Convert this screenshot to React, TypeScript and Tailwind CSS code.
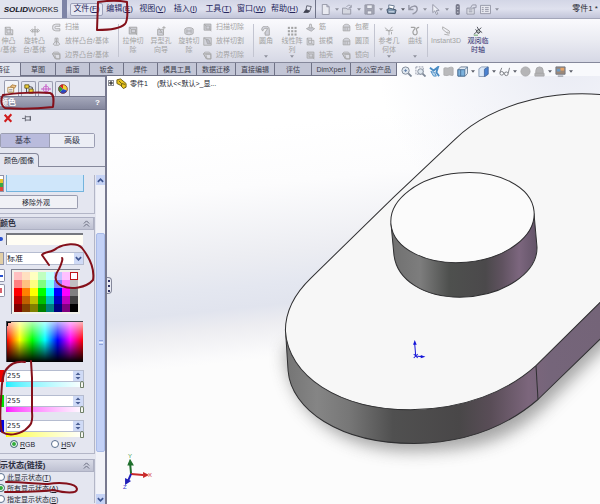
import type { ReactNode } from 'react';
import clsx from 'clsx';

type IconProps = { className?: string };

const Svg = ({
  children,
  className = 'h-[10px] w-[10px]',
}: {
  children: ReactNode;
  className?: string;
}) => (
  <svg
    viewBox="0 0 12 12"
    fill="none"
    stroke="currentColor"
    strokeWidth="1"
    className={clsx('shrink-0', className)}
    aria-hidden="true"
  >
    {children}
  </svg>
);

/* feature icons, all greyed out while a property page is open */
const BlockIcon = (p: IconProps) => (
  <Svg {...p}>
    <path d="M1.500 1.500h6v3h3v6h-9z" fill="#dcdde5" />
    <path d="M3.500 4.500h4v4h-4zM7.500 8.500l3 2M1.500 1.500l2 3" />
  </Svg>
);
const RevolveIcon = (p: IconProps) => (
  <Svg {...p}>
    <path d="M6 0v12M3 4.500h6v2.500H3z" fill="#dcdde5" />
    <path d="M3 3.500L.500 5.500 3 8M9 3.500l2.500 2L9 8" />
  </Svg>
);
const SweepIcon = (p: IconProps) => (
  <Svg {...p}>
    <path
      d="M10.500 1.500H5A4.300 4.300 0 0 0 5 10.500h5.500v-3H5.500a1.500 1.500 0 0 1 0-3h5z"
      fill="#e0e1e8"
    />
  </Svg>
);
const LoftIcon = (p: IconProps) => (
  <Svg {...p}>
    <path d="M4 1.500h4v5l2.500 3-2 1.500h-5l-2-1.500L4 6.500z" fill="#dcdde5" />
    <path d="M4 6.500h4M6 2v8" />
  </Svg>
);
const BoundaryIcon = (p: IconProps) => (
  <Svg {...p}>
    <path d="M.500 3.500l2-2h6l2 2v7h-6z" fill="#dcdde5" />
    <path d="M3.500 4.500h7v6h-5zM.500 3.500l4 7M1 3.500h9" />
  </Svg>
);
const CutIcon = (p: IconProps) => (
  <Svg {...p}>
    <path d="M1 1h10v9H1z" fill="#cfd0d8" stroke="none" />
    <path d="M1.500 1.500h9v8h-9zM4 4h5v4H4zM1.500 1.500L4 4M9 8l2 3" />
  </Svg>
);
const SlantCutIcon = (p: IconProps) => (
  <Svg {...p}>
    <path d="M1 1h10v10H1z" fill="#d3d4dc" />
    <path d="M4 3l4 1 2 5H6z" fill="#b9bac4" />
    <path d="M1 1l3 2" />
  </Svg>
);
const HoleIcon = (p: IconProps) => (
  <Svg {...p}>
    <path d="M2 4h7v7H2z" fill="#cfd0d8" />
    <path d="M3 2l5 7M9.500 0v4M7.500 2h4M4 7.500h3" />
  </Svg>
);
const RevolveCutIcon = (p: IconProps) => (
  <Svg {...p}>
    <path d="M1 3.500c1-2 9-2 10 0V9c-1 2-9 2-10 0z" fill="#d3d4dc" />
    <path d="M3.500 4v5M8.500 4v5M4 6h4" />
  </Svg>
);
const FilletIcon = (p: IconProps) => (
  <Svg {...p}>
    <path d="M1 5a4.500 4.500 0 0 1 9-1v7H5V8z" fill="#cfd0d8" />
    <path d="M2 6a5 5 0 0 1 6-3L4 9" fill="#f0f0f4" />
  </Svg>
);
const PatternIcon = (p: IconProps) => (
  <Svg {...p}>
    {[1, 5, 9].map((x) =>
      [1, 5, 9].map((y) => (
        <rect
          key={`${x}-${y}`}
          x={x}
          y={y}
          width="2.500"
          height="2.500"
          fill="currentColor"
          stroke="none"
        />
      ))
    )}
  </Svg>
);
const RibIcon = (p: IconProps) => (
  <Svg {...p}>
    <path d="M.500 7.500L6 5l5.500 2.500L7 11z" fill="#c6c8d2" />
    <path d="M5 1.500h2l1 5H4z" fill="#dcdde5" />
  </Svg>
);
const CapIcon = (p: IconProps) => (
  <Svg {...p}>
    <path d="M1.500 5c0-4.500 9-4.500 9 0v5.500h-9z" fill="#d3d4dc" />
    <path d="M1.500 5.500h9M4 6v4M7 6v4" />
  </Svg>
);
const CurveIcon = (p: IconProps) => (
  <Svg {...p}>
    <path d="M1 1.500h4c2 0 1 2-.500 3.500S3 10.500 6 10.500s3-3 2-5 .500-4 3-4" strokeWidth="1.500" />
  </Svg>
);
const RefGeomIcon = (p: IconProps) => (
  <Svg {...p}>
    <path d="M1 2l5 4 4-5M6 6v5M2 5l4 1 5-1M9 7v3" />
  </Svg>
);
const InstantIcon = (p: IconProps) => (
  <Svg {...p}>
    <path d="M2 1l8 5v3M2 4l6 5M10 9L7 7M2 1v3M4 10l6 1" />
  </Svg>
);
const AxisIcon = (p: IconProps) => (
  <Svg {...p}>
    <path d="M1 10L10 2M5 1l2 4 4 3M3 4l4 5" stroke="#3c3f48" />
    <path d="M4 6l3-2 2 3-3 2z" fill="#b7c0bc" stroke="#3c3f48" />
    <path d="M1 11h5" stroke="#4f9a4a" />
  </Svg>
);

/* quick access bar */
const NewIcon = (p: IconProps) => (
  <Svg {...p}>
    <path d="M2.500.500h5l2.500 2.500v8.500H2.500zM7.500.500V3H10" fill="#e9eaf1" />
  </Svg>
);
const OpenIcon = (p: IconProps) => (
  <Svg {...p}>
    <path d="M.500 4.500h4l1 1h4v5.500h-9z" fill="#d5d7e0" />
    <path d="M5 3c2-2.500 4-2 5 .500M10 1v3H7.500" />
  </Svg>
);
const SaveIcon = (p: IconProps) => (
  <Svg {...p}>
    <path d="M1 1h10v10H1z" fill="#a5a7b4" />
    <path d="M3 1h6v4H3zM3.500 7.500h5V11h-5z" fill="#eceef4" />
  </Svg>
);
const PrintIcon = (p: IconProps) => (
  <Svg {...p}>
    <path d="M3 1l6 1-1 4H3z" fill="#fff" stroke="#63758c" />
    <path d="M1 6l3-1.500 7 2-1 4-8-.500z" fill="#7f97b0" stroke="#3f5166" />
    <path d="M3 8.500h6" stroke="#dfe8f2" />
  </Svg>
);
const UndoIcon = (p: IconProps) => (
  <Svg {...p}>
    <path d="M1 1v5h5M1.500 5.500C4 1.500 9.500 1 10 5s-3 5-5 6" strokeWidth="1.500" />
  </Svg>
);
const SelectIcon = (p: IconProps) => (
  <Svg {...p}>
    <path d="M3 .500v9l2.200-2L7 11.500l1.500-.700L6.800 7H10z" fill="#eef0f6" />
  </Svg>
);
const RebuildIcon = (p: IconProps) => (
  <Svg {...p}>
    <rect x="4" y="0" width="4.500" height="12" rx="2" fill="#77798a" stroke="none" />
    <path d="M5.500 3h1.500M5.500 6h1.500M5.500 9h1.500" stroke="#d5d7e0" />
  </Svg>
);
const OptionsIcon = (p: IconProps) => (
  <Svg {...p}>
    <path d="M1 4.500h8v6.500H1z" fill="#dfe1e9" />
    <path d="M5 4l2-3h4v3H8M3 6.500h4M3 8.500h4" />
  </Svg>
);
const PropsIcon = (p: IconProps) => (
  <Svg {...p}>
    <path d="M.500 1.500h11v9H.500z" fill="#e7e8ef" />
    <path d="M2 4h2M2 6h2M2 8h2M5.500 4h4M5.500 6h4M5.500 8h4" />
  </Svg>
);

/* heads-up view toolbar */
const ZoomFitIcon = (p: IconProps) => (
  <Svg {...p}>
    <circle cx="5" cy="5" r="4" fill="#dfe7ef" stroke="#7d8796" />
    <path d="M8 8l3.500 3.500" stroke="#7d8796" strokeWidth="2" />
    <path d="M3.500 5h3M5 3.500v3" stroke="#5f7ea8" />
  </Svg>
);
const ZoomAreaIcon = (p: IconProps) => (
  <Svg {...p}>
    <path d="M1 1h8v8H1z" stroke="#8b93a3" strokeDasharray="2 1" />
    <circle cx="6" cy="6" r="3" fill="#dfe7ef" stroke="#7d8796" />
    <path d="M8.500 8.500l3 3" stroke="#7d8796" strokeWidth="2" />
  </Svg>
);
const PrevViewIcon = (p: IconProps) => (
  <Svg {...p}>
    <path d="M1 2l4 3 5-4-2 6 3 4" stroke="#4a8cc4" strokeWidth="2" />
    <path d="M2 6l4 1 2 4H5z" fill="#b9d7ee" stroke="#4a8cc4" />
  </Svg>
);
const SectionIcon = (p: IconProps) => (
  <Svg {...p}>
    <path d="M1 2.500C3 1 5 3 6.500 2S10 1 11 2v8c-2 1-3-1-5 0s-4 0-5 0z" fill="#b9b9bb" stroke="#acacae" />
  </Svg>
);
const CubeIcon = (p: IconProps) => (
  <Svg {...p}>
    <path d="M4 1h7.500v7L9 11H1V4z" fill="#e3ebf3" stroke="#6d7f94" />
    <path d="M1 4h7.500v7H1z" fill="#7db2dc" stroke="#4a7299" />
    <path d="M8.500 4l3-3M4 4v7" stroke="#4a7299" />
  </Svg>
);
const ShadedIcon = (p: IconProps) => (
  <Svg {...p}>
    <path d="M1 3l3-2h7v8l-3 2.500H1z" fill="#dbe8f7" stroke="#8a9bb5" />
    <path d="M7 3.500L11 1v8l-4 2.500z" fill="#4a82d2" stroke="#4a6fa5" />
  </Svg>
);
const GlassesIcon = (p: IconProps) => (
  <Svg {...p}>
    <circle cx="3" cy="8" r="2" stroke="#777a80" />
    <circle cx="8" cy="8.500" r="2" stroke="#777a80" />
    <path d="M1 7l2-5M5 7.500h1M10 8l1.500-6" stroke="#777a80" />
  </Svg>
);
const SphereIcon = (p: IconProps) => (
  <Svg {...p}>
    <circle cx="6" cy="6" r="5" fill="#b5b5b7" stroke="#ababad" />
  </Svg>
);
const SceneIcon = (p: IconProps) => (
  <Svg {...p}>
    <path d="M2 8V5a4 4 0 0 1 8 0v3zM1 8h10v3H1z" fill="#b5b5b7" stroke="#a8a8ab" />
  </Svg>
);
const ViewSetIcon = (p: IconProps) => (
  <Svg {...p}>
    <path d="M1 1h10v8H1z" fill="#9c8878" stroke="#737883" />
    <path d="M2 3h4v3H2z" fill="#6b9ac6" stroke="none" />
    <path d="M6 2h4v3H6z" fill="#e5a468" stroke="none" />
    <path d="M3 11h6" stroke="#737883" />
  </Svg>
);

const Caret = ({ dark }: { dark?: boolean }) => (
  <svg viewBox="0 0 6 4" className="h-[3px] w-[4px] shrink-0" aria-hidden="true">
    <path d="M0 0h6L3 4z" fill={dark ? '#5c5f6a' : '#8f919d'} />
  </svg>
);

const menus: [string, string][] = [
  ['文件', 'F'],
  ['编辑', 'E'],
  ['视图', 'V'],
  ['插入', 'I'],
  ['工具', 'T'],
  ['窗口', 'W'],
  ['帮助', 'H'],
];

const quickTools = [
  { id: 'new', Icon: NewIcon, menu: true },
  { id: 'open', Icon: OpenIcon, menu: true },
  { id: 'save', Icon: SaveIcon, menu: true },
  { id: 'print', Icon: PrintIcon, menu: true },
  { id: 'undo', Icon: UndoIcon, menu: true },
  { id: 'select', Icon: SelectIcon, menu: true },
  { id: 'rebuild', Icon: RebuildIcon, menu: false },
  { id: 'options', Icon: OptionsIcon, menu: false },
  { id: 'props', Icon: PropsIcon, menu: true },
];

const MenuBar = () => (
  <header className="flex h-[19px] shrink-0 items-center whitespace-nowrap border-b border-[#a3a6b9] bg-linear-to-b from-[#d3d6e6] via-[#dfe1ee] to-[#c2c5d9]">
    <div className="flex h-full w-[62px] shrink-0 items-center justify-center bg-[#e1e3ee] pt-[2px] text-[8px] text-[#15151f]">
      <b className="italic">SOLID</b>
      <span>WORKS</span>
    </div>
    <div className="mr-[3px] h-full w-[5px] shrink-0 bg-[#7e84a6]" />
    <nav className="flex h-full shrink-0 items-center">
      {menus.map(([name, key], i) => (
        <button
          key={key}
          type="button"
          className={clsx(
            'h-[13px] w-[33px] rounded-xs text-[8px] leading-none text-[#25265c]',
            i === 0 && 'border border-[#9da1ba] bg-[#e6e8f3]'
          )}
        >
          {name}(<u>{key}</u>)
        </button>
      ))}
    </nav>
    <button type="button" aria-label="pin menu" className="ml-[2px] text-[#3f4150]">
      <Svg className="h-[9px] w-[9px]">
        <path d="M5 1l6 1-2 6-5-2z" fill="#e6e8f3" />
        <path d="M4 6l-3 4h6l2-2" fill="#3f4150" />
      </Svg>
    </button>
    <div className="mr-1 ml-[3px] h-full w-px bg-[#6f7388]" />
    <div className="flex shrink-0 items-center gap-[3px] text-[#9496a5]">
      {quickTools.map(({ id, Icon, menu }) => (
        <button key={id} type="button" aria-label={id} className="flex items-center gap-1">
          <Icon className="h-[11px] w-[11px]" />
          {menu && <Caret dark={id === 'print'} />}
        </button>
      ))}
    </div>
    <span className="mr-[2px] ml-auto text-[8px] text-[#25262e]">零件1 *</span>
  </header>
);

type BigToolProps = {
  Icon: (p: IconProps) => ReactNode;
  lines: string[];
  className: string;
  menu?: boolean;
};

const BigTool = ({ Icon, lines, className, menu }: BigToolProps) => (
  <button
    type="button"
    className={clsx('flex h-full shrink-0 flex-col items-center pt-[7px] text-[7px] leading-[9px]', className)}
  >
    <Icon />
    {lines.map((line) => (
      <span key={line}>{line}</span>
    ))}
    {menu && (
      <span className="mt-auto pb-1">
        <Caret />
      </span>
    )}
  </button>
);

type SmallTool = [(p: IconProps) => ReactNode, string];

const ToolColumn = ({ tools, className }: { tools: SmallTool[]; className: string }) => (
  <div className={clsx('flex shrink-0 flex-col pt-px', className)}>
    {tools.map(([Icon, label]) => (
      <button key={label} type="button" className="flex h-[14px] items-center gap-1 text-[7px]">
        <Icon className="h-[9px] w-[9px]" />
        {label}
      </button>
    ))}
  </div>
);

const Separator = () => <div className="my-[5px] w-px shrink-0 bg-[#c3c5d1]" />;

const Ribbon = () => (
  <div className="flex h-[43px] shrink-0 overflow-hidden whitespace-nowrap bg-linear-to-b from-[#fafafd] via-[#eaebf2] to-[#d6d8e5] text-[#a3a3a3]">
    <BigTool Icon={BlockIcon} lines={['伸凸', '/基体']} className="w-[17px]" />
    <BigTool Icon={RevolveIcon} lines={['旋转凸', '台/基体']} className="w-[35px]" />
    <ToolColumn
      className="w-[66px]"
      tools={[
        [SweepIcon, '扫描'],
        [LoftIcon, '放样凸台/基体'],
        [BoundaryIcon, '边界凸台/基体'],
      ]}
    />
    <Separator />
    <BigTool Icon={CutIcon} lines={['拉伸切', '除']} className="w-7" />
    <BigTool Icon={HoleIcon} lines={['异型孔', '向导']} className="w-7" />
    <BigTool Icon={RevolveCutIcon} lines={['旋转切', '除']} className="w-7" />
    <ToolColumn
      className="w-[50px]"
      tools={[
        [CutIcon, '扫描切除'],
        [SlantCutIcon, '放样切割'],
        [BoundaryIcon, '边界切除'],
      ]}
    />
    <Separator />
    <BigTool Icon={FilletIcon} lines={['圆角']} className="w-6" menu />
    <BigTool Icon={PatternIcon} lines={['线性阵', '列']} className="w-7" menu />
    <ToolColumn
      className="w-9"
      tools={[
        [RibIcon, '筋'],
        [BlockIcon, '拔模'],
        [CutIcon, '抽壳'],
      ]}
    />
    <ToolColumn
      className="w-8"
      tools={[
        [CapIcon, '包覆'],
        [CapIcon, '圆顶'],
        [BoundaryIcon, '镜向'],
      ]}
    />
    <Separator />
    <BigTool Icon={RefGeomIcon} lines={['参考几', '何体']} className="w-7" menu />
    <BigTool Icon={CurveIcon} lines={['曲线']} className="w-6" menu />
    <Separator />
    <BigTool Icon={InstantIcon} lines={['Instant3D']} className="w-9" />
    <BigTool Icon={AxisIcon} lines={['观阅临', '时轴']} className="w-7 text-[#2c2d6b]" />
  </div>
);

const tabs = [
  { name: '草图', width: 'w-[35px]' },
  { name: '曲面', width: 'w-[34px]' },
  { name: '钣金', width: 'w-[34px]' },
  { name: '焊件', width: 'w-[34px]' },
  { name: '模具工具', width: 'w-[39px]' },
  { name: '数据迁移', width: 'w-[39px]' },
  { name: '直接编辑', width: 'w-[39px]' },
  { name: '评估', width: 'w-[37px]' },
  { name: 'DimXpert', width: 'w-[39px]' },
  { name: '办公室产品', width: 'w-[46px]' },
];

const viewTools = [
  { id: 'zoom to fit', Icon: ZoomFitIcon, menu: false },
  { id: 'zoom to area', Icon: ZoomAreaIcon, menu: false },
  { id: 'previous view', Icon: PrevViewIcon, menu: false },
  { id: 'section view', Icon: SectionIcon, menu: false },
  { id: 'orientation', Icon: CubeIcon, menu: true },
  { id: 'display style', Icon: ShadedIcon, menu: true },
  { id: 'hide items', Icon: GlassesIcon, menu: true },
  { id: 'appearance', Icon: SphereIcon, menu: false },
  { id: 'scene', Icon: SceneIcon, menu: true },
  { id: 'view settings', Icon: ViewSetIcon, menu: true },
];

const TabRow = () => (
  <div className="relative z-10 flex h-[14px] shrink-0 whitespace-nowrap border-t border-[#85889b] bg-[#f8f9fc] text-[7px] leading-none text-[#3b3d4c]">
    <button type="button" className="w-5 shrink-0 overflow-hidden bg-[#e4e6ef] text-left">
      <span className="-ml-1">特征</span>
    </button>
    {tabs.map(({ name, width }) => (
      <button
        key={name}
        type="button"
        className={clsx(
          'shrink-0 border-b border-l border-[#6f7286] bg-[#c3c6d6]',
          width
        )}
      >
        {name}
      </button>
    ))}
    <div className="flex shrink-0 items-end gap-[3px] border-l border-[#6f7286] pl-1">
      {viewTools.map(({ id, Icon, menu }) => (
        <button key={id} type="button" aria-label={id} className="-mb-px flex items-center gap-[3px]">
          <Icon className="h-[11px] w-[11px]" />
          {menu && <Caret dark />}
        </button>
      ))}
    </div>
  </div>
);

const Chevrons = () => (
  <svg viewBox="0 0 8 8" className="h-[7px] w-[7px]" fill="none" stroke="#5d6074" aria-hidden="true">
    <path d="M1 4l3-3 3 3M1 7.500l3-3 3 3" />
  </svg>
);

const GroupHeader = ({ title }: { title: string }) => (
  <h2 className="flex h-[13px] items-center justify-between border border-[#adb0c3] bg-linear-to-b from-[#d9dbe7] to-[#bec1d2] pr-[3px] text-[8px] font-bold leading-none text-[#2c2e3e]">
    <span className="-ml-px">{title}</span>
    <Chevrons />
  </h2>
);

const hues = [
  ['#ffc0c0', '#ffe0c0', '#ffffc0', '#c0ffc0', '#c0ffff', '#c0c0ff', '#ffc0ff', '#e8e8e8'],
  ['#ff8080', '#ffc080', '#ffff80', '#80ff80', '#80ffff', '#8080ff', '#ff80ff', '#c0c0c0'],
  ['#ff0000', '#ff8000', '#ffff00', '#00ff00', '#00ffff', '#0000ff', '#ff00ff', '#808080'],
  ['#c00000', '#c06000', '#c0c000', '#00c000', '#00c0c0', '#0000c0', '#c000c0', '#404040'],
  ['#800000', '#804000', '#808000', '#008000', '#008080', '#000080', '#800080', '#000000'],
];

const Palette = () => (
  <div className="ml-[10px] w-[69px] border-t border-l border-[#7d8090] bg-[#f1f1ea] p-[2px]">
    <div className="grid w-16 grid-cols-8">
      {hues.flat().map((hue, i) => (
        <button
          key={hue}
          type="button"
          aria-label={hue}
          className={clsx('h-2', i === 7 && 'border border-[#c01818]')}
          style={{ backgroundColor: i === 7 ? '#ffffff' : hue }}
        />
      ))}
    </div>
  </div>
);

const channels = [
  { id: 'red', swatch: 'bg-[#f00000]', track: 'from-[#00f0ff]' },
  { id: 'green', swatch: 'bg-[#00e000]', track: 'from-[#ff00ff]' },
  { id: 'blue', swatch: 'bg-[#0000e0]', track: 'from-[#ffff00]' },
];

const Channel = ({ id, swatch, track }: (typeof channels)[number]) => (
  <div className="flex h-[25px] items-start">
    <div className={clsx('mr-[2px] h-3 w-1', swatch)} />
    <div className="w-[78px]">
      <div className="flex h-3 items-center border border-[#b5bcd0] bg-white">
        <input
          type="text"
          aria-label={id}
          defaultValue="255"
          className="w-full min-w-0 font-['DejaVu_Sans'] text-[7px] leading-none text-[#22242e] outline-none"
        />
        <button type="button" aria-label={`${id} step`} className="h-full w-[10px] shrink-0 bg-[#cfdaf6]">
          <svg viewBox="0 0 10 10" className="h-full w-full" aria-hidden="true">
            <path d="M2.500 4L5 1.500 7.500 4zM2.500 6L5 8.500 7.500 6z" fill="#4a5f94" />
          </svg>
        </button>
      </div>
      <input
        type="range"
        aria-label={`${id} level`}
        min="0"
        max="255"
        defaultValue="255"
        className={clsx(
          'block h-[5px] w-full appearance-none bg-linear-to-r to-white [&::-webkit-slider-thumb]:h-[7px] [&::-webkit-slider-thumb]:w-[4px] [&::-webkit-slider-thumb]:appearance-none [&::-webkit-slider-thumb]:rounded-t-full [&::-webkit-slider-thumb]:border [&::-webkit-slider-thumb]:border-[#6f8068] [&::-webkit-slider-thumb]:bg-[#f5f7f2]',
          track
        )}
      />
    </div>
  </div>
);

const radioStyle =
  'h-2 w-2 shrink-0 appearance-none rounded-full border border-[#5b708f] bg-white checked:bg-[#2fae3a] checked:shadow-[inset_0_0_0_1px_white]';

const Radio = ({
  name,
  label,
  hotkey,
  suffix = '',
  checked,
}: {
  name: string;
  label: string;
  hotkey: string;
  suffix?: string;
  checked?: boolean;
}) => (
  <label className="flex items-center gap-[2px] whitespace-nowrap text-[7px] leading-none text-[#22242e]">
    <input type="radio" name={name} defaultChecked={checked} className={radioStyle} />
    <span>
      {label}
      <u>{hotkey}</u>
      {suffix}
    </span>
  </label>
);

const PanelTabs = () => (
  <div className="flex h-5 items-end gap-[2px] border-t border-[#85889b] pl-1">
    <span className="flex h-4 w-[15px] items-center justify-center rounded-t-xs border border-b-0 border-[#9a9db0] bg-[#f3f4f8]">
      <Svg>
        <path d="M1 4h7v6H1z" fill="#fff6e0" stroke="#a77b3c" />
        <path d="M4 3l2-2 5 1-2 3z" fill="#f0c48a" stroke="#a77b3c" />
        <path d="M2.500 6.500h4M2.500 8.500h4" stroke="#8b8fa3" />
      </Svg>
    </span>
    <span className="flex h-[15px] w-[15px] items-center justify-center rounded-t-xs border border-b-0 border-[#9a9db0]">
      <Svg>
        <path d="M1 1h5v4H1zM6 6h5v5H6z" fill="#f2cf35" stroke="#5b5420" />
        <path d="M3 5v5h3M6 3l4 1v2" stroke="#33343c" />
      </Svg>
    </span>
    <span className="flex h-[15px] w-[15px] items-center justify-center rounded-t-xs border border-b-0 border-[#9a9db0]">
      <Svg>
        <circle cx="6" cy="6" r="3.500" stroke="#c964c9" />
        <path d="M6 0v12M0 6h12" stroke="#c03fc0" />
      </Svg>
    </span>
    <span className="flex h-[15px] w-[15px] items-center justify-center rounded-t-xs border border-b-0 border-[#9a9db0]">
      <Svg>
        <g stroke="none">
          <path d="M6 6V.500A5.500 5.500 0 0 1 11 8z" fill="#f2d330" />
          <path d="M6 6l5 2a5.500 5.500 0 0 1-9 2z" fill="#2748c8" />
          <path d="M6 6l-4 4A5.500 5.500 0 0 1 2 2z" fill="#2c9c3c" />
          <path d="M6 6L2 2a5.500 5.500 0 0 1 4-1.500z" fill="#e02222" />
        </g>
        <circle cx="6" cy="6" r="5.200" stroke="#8a3a3a" />
      </Svg>
    </span>
  </div>
);

const PropertyPanel = () => (
  <aside className="flex w-[107px] shrink-0 flex-col overflow-hidden border-r-2 border-[#77798f] bg-[#e4e6f0]">
    <PanelTabs />
    <h1 className="flex h-[14px] shrink-0 items-center justify-between border-y border-[#75788e] bg-linear-to-b from-[#a5a8bb] to-[#84879d] pr-[5px] text-[8px] font-bold text-white">
      <span>颜色</span>
      <span>?</span>
    </h1>
    <div className="flex h-[23px] shrink-0 items-start gap-2 pt-[3px] pl-[3px]">
      <button type="button" aria-label="cancel" className="flex">
        <Svg>
          <path d="M2 2l8 8.500M10 1.500L2 10.500" stroke="#d01c1c" strokeWidth="2.500" />
        </Svg>
      </button>
      <button type="button" aria-label="keep visible" className="flex">
        <Svg className="h-[10px] w-3">
          <path d="M0 6.500h4M4 3v7M4 4.500h6v4H4M10 3.500v6" stroke="#585a66" />
        </Svg>
      </button>
    </div>
    <div className="flex h-[15px] w-[95px] shrink-0 rounded-xs border border-[#9b9eb3] text-[8px] leading-none text-[#33354a]">
      <button type="button" className="flex-1 border-r border-[#9b9eb3] bg-[#b9bbdc] pr-1">
        基本
      </button>
      <button type="button" className="flex-1 bg-[#eceef5]">
        高级
      </button>
    </div>
    <div className="flex h-[19px] shrink-0 items-end border-b border-[#85889b]">
      <button
        type="button"
        className="-mb-px h-[14px] w-[39px] rounded-tr-sm border border-b-0 border-l-0 border-[#85889b] bg-[#e4e6f0] text-[7px] leading-none text-[#22242e]"
      >
        颜色/图像
      </button>
    </div>

    <div className="flex min-h-0 flex-1 pt-2">
      <div className="min-h-0 w-[95px] overflow-hidden">
        <section className="h-[39px] border-r border-b border-[#b3b6c7]">
          <div className="flex gap-[2px]">
            <div className="flex h-[17px] w-1 flex-col justify-end border border-l-0 border-[#8f93a8] bg-white">
              <div className="h-1 bg-[#e8c22c]" />
              <div className="h-1 bg-[#39a845]" />
              <div className="h-1 bg-[#e04a3a]" />
            </div>
            <div className="h-[17px] w-[78px] border border-t-0 border-[#74b4dd] bg-[#cfe6fa]" />
          </div>
          <button
            type="button"
            className="mt-[3px] block h-[14px] w-[78px] rounded-r-xs border border-l-0 border-[#9a9db0] bg-[#f0f1f6] pl-[22px] text-left text-[7px] leading-none text-[#22242e]"
          >
            移除外观
          </button>
        </section>

        <section className="mt-[3px] border-r border-b border-[#b3b6c7] pb-[5px]">
          <GroupHeader title="颜色" />
          <div className="mt-[3px] flex items-center gap-[3px]">
            <div className="h-1 w-[3px] rounded-r-full bg-[#2750d0]" />
            <div className="h-3 w-[77px] border-t-2 border-l border-[#76787f] bg-[#fffdf4]" />
          </div>
          <div className="mt-[7px] flex gap-[2px]">
            <div className="h-[13px] w-1 border border-l-0 border-[#8f93a8] bg-[#e2cfa6]" />
            <div className="relative h-[13px] w-[78px] border border-[#b5bcd0] bg-white">
              <select
                aria-label="palette"
                className="block h-full w-full appearance-none text-[8px] leading-none text-[#22242e] outline-none"
              >
                <option>标准</option>
              </select>
              <span className="pointer-events-none absolute inset-y-0 right-0 flex w-[9px] items-center justify-center bg-[#cfdaf6]">
                <svg viewBox="0 0 8 8" className="h-[7px] w-[7px]" fill="none" stroke="#3e5590" strokeWidth="2" aria-hidden="true">
                  <path d="M1 2.500l3 3 3-3" />
                </svg>
              </span>
            </div>
          </div>
          <div className="mt-1 flex">
            <div className="-mr-1 flex w-[5px] shrink-0 flex-col gap-[2px]">
              <div className="flex h-[13px] items-center rounded-r-xs border border-l-0 border-[#8f93a8] bg-white">
                <div className="h-[2px] w-[3px] bg-[#2750d0]" />
              </div>
              <div className="flex h-[13px] items-center rounded-r-xs border border-l-0 border-[#8f93a8] bg-white">
                <div className="h-[5px] w-[2px] bg-[#d8606c]" />
              </div>
            </div>
            <Palette />
          </div>
          <div className="mt-[7px] ml-[6px] h-[41px] w-[77px] border-t border-l border-[#44464e] bg-[linear-gradient(to_bottom,rgba(255,255,255,.7),transparent_45%,#000),linear-gradient(to_right,red,#ff0,lime,cyan,blue,#f0f,red)]">
            <div className="h-1 w-1 border-t border-l border-black" />
          </div>
          <div className="mt-2">
            {channels.map((channel) => (
              <Channel key={channel.id} {...channel} />
            ))}
          </div>
          <div className="-mt-[5px] flex gap-4 pl-[10px]">
            <Radio name="model" label="" hotkey="R" suffix="GB" checked />
            <Radio name="model" label="" hotkey="H" suffix="SV" />
          </div>
        </section>

        <section className="mt-[5px] border-r border-[#b3b6c7]">
          <GroupHeader title="示状态(链接)" />
          <div className="-ml-[3px] flex flex-col gap-[3px] pt-px">
            <Radio name="state" label="此显示状态(" hotkey="T" suffix=")" />
            <Radio name="state" label="所有显示状态(" hotkey="A" suffix=")" checked />
            <Radio name="state" label="指定显示状态(" hotkey="S" suffix=")" />
          </div>
        </section>
      </div>

      <div className="ml-px flex w-[9px] shrink-0 flex-col bg-[#f1f2f8]">
        <button type="button" aria-label="scroll up" className="flex h-[10px] items-center justify-center bg-[#c6d3f5]">
          <svg viewBox="0 0 8 8" className="h-[7px] w-[7px]" fill="none" stroke="#3e5590" strokeWidth="2" aria-hidden="true">
            <path d="M1 5.500l3-3 3 3" />
          </svg>
        </button>
        <div className="mt-12 flex h-[219px] flex-col items-center justify-center gap-px rounded-xs border border-[#a9bbe8] bg-[#c3d1f6]">
          <div className="h-px w-1 bg-[#8ea4dc]" />
          <div className="h-px w-1 bg-[#eef3ff]" />
          <div className="h-px w-1 bg-[#8ea4dc]" />
        </div>
        <button type="button" aria-label="scroll down" className="mt-auto flex h-[10px] items-center justify-center bg-[#c6d3f5]">
          <svg viewBox="0 0 8 8" className="h-[7px] w-[7px]" fill="none" stroke="#3e5590" strokeWidth="2" aria-hidden="true">
            <path d="M1 2.500l3 3 3-3" />
          </svg>
        </button>
      </div>
    </div>
  </aside>
);

/* slotted plate with a round boss, drawn at three units per pixel */
const Model = () => (
  <svg
    viewBox="0 0 493 427"
    preserveAspectRatio="xMinYMin slice"
    className="absolute inset-0 h-full w-full"
    aria-label="model"
  >
    <defs>
      <linearGradient id="sky" gradientUnits="userSpaceOnUse" x1="60" y1="60" x2="84" y2="290">
        <stop offset="0" stopColor="#ffffff" />
        <stop offset=".25" stopColor="#fcfcfd" />
        <stop offset=".55" stopColor="#ecedf2" />
        <stop offset=".68" stopColor="#e4e7f0" />
        <stop offset=".77" stopColor="#e1e4ee" />
        <stop offset=".85" stopColor="#ededf1" />
        <stop offset=".97" stopColor="#fafafb" />
        <stop offset="1" stopColor="#fcfcfc" />
      </linearGradient>
      <radialGradient id="corner" gradientUnits="userSpaceOnUse" cx="460" cy="-20" r="190">
        <stop offset="0" stopColor="#e9ebf4" />
        <stop offset="1" stopColor="#e9ebf4" stopOpacity="0" />
      </radialGradient>
      <linearGradient id="plate" gradientUnits="userSpaceOnUse" x1="45" y1="0" x2="990" y2="0">
        <stop offset="0" stopColor="#747474" />
        <stop offset=".1" stopColor="#858585" />
        <stop offset=".2" stopColor="#777777" />
        <stop offset=".34" stopColor="#505050" />
        <stop offset=".55" stopColor="#494748" />
        <stop offset=".65" stopColor="#594d57" />
        <stop offset=".77" stopColor="#7c667c" />
        <stop offset=".84" stopColor="#75657a" />
        <stop offset="1" stopColor="#746478" />
      </linearGradient>
      <linearGradient id="boss" gradientUnits="userSpaceOnUse" x1="361" y1="0" x2="797" y2="0">
        <stop offset="0" stopColor="#707070" />
        <stop offset=".2" stopColor="#7d7d7d" />
        <stop offset=".4" stopColor="#4e504e" />
        <stop offset=".65" stopColor="#4b494b" />
        <stop offset=".76" stopColor="#5f525f" />
        <stop offset=".88" stopColor="#7c667e" />
        <stop offset="1" stopColor="#635468" />
      </linearGradient>
      <filter id="soft" x="-20%" y="-20%" width="140%" height="140%">
        <feGaussianBlur stdDeviation="24" />
      </filter>
    </defs>
    <rect width="493" height="427" fill="url(#sky)" />
    <rect width="493" height="427" fill="url(#corner)" />
    <g transform="translate(163 4) scale(.33333)" stroke="#2f2f31" strokeWidth="3" strokeLinejoin="round">
      <path
        d="M45 800C40 960 180 1110 420 1112C620 1110 720 1080 830 970L1040 760V600L500 700z"
        fill="#6c6c6c"
        opacity=".6"
        stroke="none"
        filter="url(#soft)"
      />
      <path
        d="M45 745L53 870C62 985 205 1088 430 1088C600 1086 715 1030 800 957L1040 724V600L420 700z"
        fill="url(#plate)"
      />
      <path
        d="M1040 50C850 20 690 75 600 138C580 152 565 165 550 180L370 350L122 592C72 640 45 695 45 750C52 885 205 987 420 987C580 985 710 932 795 855L1040 613z"
        fill="#f7f7f7"
      />
      <path d="M795 855L801 957" />
      <path d="M361 430L370 525C380 600 460 650 567 650C700 648 800 575 798 500L789 400z" fill="url(#boss)" />
      <ellipse cx="575" cy="412" rx="215" ry="134" transform="rotate(-5 575 412)" fill="#fbfbfb" />
      <g stroke="#1414d8" fill="#1414d8">
        <path d="M435 826L432 790M435 826L455 828" />
        <path d="M427 792L432 778L438 792zM450 823L464 828L450 833z" stroke="none" />
        <path d="M429 820l12 12M441 820l-12 12" />
      </g>
    </g>
    <g strokeWidth="2">
      <path d="M24 397L23 386" stroke="#1f6f2c" />
      <path d="M21 388L23 383L26 388z" fill="#1f6f2c" stroke="#1f6f2c" strokeWidth="1" />
      <path d="M24 397L36 398" stroke="#c82828" />
      <path d="M36 395L42 398L36 401z" fill="#c82828" />
      <path d="M24 397L21 404" stroke="#2020b8" />
      <path d="M18 401L24 404L18 408z" fill="#2020b8" />
    </g>
    <g fontSize="6" fontFamily="Liberation Sans">
      <text x="21" y="381" fill="#3d9a48">Y</text>
      <text x="41" y="400" fill="#d43c3c">X</text>
      <text x="16" y="412" fill="#3a3ad0">Z</text>
    </g>
  </svg>
);

const Viewport = () => (
  <main className="relative min-w-0 flex-1 overflow-hidden bg-[#fdfdfd]">
    <Model />
    <div className="relative flex h-[14px] items-center whitespace-nowrap text-[7px] leading-none text-[#22242e]">
      <button
        type="button"
        aria-label="expand tree"
        className="ml-px flex h-[6px] w-[6px] items-center justify-center border border-[#8b8d96] bg-white"
      >
        <svg viewBox="0 0 4 4" className="h-1 w-1" stroke="#111" aria-hidden="true">
          <path d="M0 2h4M2 0v4" />
        </svg>
      </button>
      <Svg className="ml-[2px] h-[11px] w-[11px]">
        <path d="M1 2l4-1 6 5v4l-3 1.500L5 8 1 6z" fill="#e8c51e" stroke="#6a5910" />
        <path d="M3 3l3 3 4 1M6 6v3" stroke="#6a5910" />
      </Svg>
      <span className="ml-[3px]">零件1</span>
      <span className="ml-[9px]">(默认&lt;&lt;默认&gt;_显...</span>
    </div>
    <button
      type="button"
      aria-label="collapse panel"
      className="absolute top-[201px] left-0 flex h-[17px] w-[5px] flex-col items-center justify-around rounded-r-sm border border-l-0 border-[#85889b] bg-[#e8eaf3]"
    >
      <span className="h-[2px] w-[2px] bg-[#34376a]" />
      <span className="h-[2px] w-[2px] bg-[#34376a]" />
      <span className="h-[2px] w-[2px] bg-[#34376a]" />
    </button>
  </main>
);

/* hand-drawn red marks laid over the whole window */
const Ink = () => (
  <svg
    width="600"
    height="504"
    viewBox="0 0 600 504"
    fill="none"
    stroke="#84101a"
    strokeWidth="2"
    strokeLinecap="round"
    strokeLinejoin="round"
    className="pointer-events-none absolute top-0 left-0 z-20"
    aria-hidden="true"
  >
    <path d="M98 2L97 30C108 30 120 29 125 24C129 19 127 8 127 2C118 0 105 1 98 2" />
    <path d="M3 95C15 93 38 92 50 93C54 94 54 99 53 107C36 109 16 109 5 108C0 105 1 98 3 95" />
    <path d="M49 265L42 255C44 251 52 253 57 248C64 244 77 242 82 248C89 257 95 268 93 280C86 288 71 290 62 286C52 281 56 273 59 269C62 263 63 258 62 258" />
    <path d="M25 362C15 361 10 364 5 371C1 380 2 388 1 400C0 412 0 425 2 432C8 436 18 435 25 430C31 425 33 423 32 412V378L31 361" />
    <path d="M6 482C25 482 37 484 48 484C60 482 76 483 77 489C77 494 65 493 53 490C38 492 20 492 5 492" />
  </svg>
);

export default function App() {
  return (
    <div className="relative flex h-screen flex-col overflow-hidden font-['Liberation_Sans','Noto_Sans_CJK_SC',sans-serif]">
      <MenuBar />
      <Ribbon />
      <TabRow />
      <div className="flex min-h-0 flex-1">
        <PropertyPanel />
        <Viewport />
      </div>
      <Ink />
    </div>
  );
}
